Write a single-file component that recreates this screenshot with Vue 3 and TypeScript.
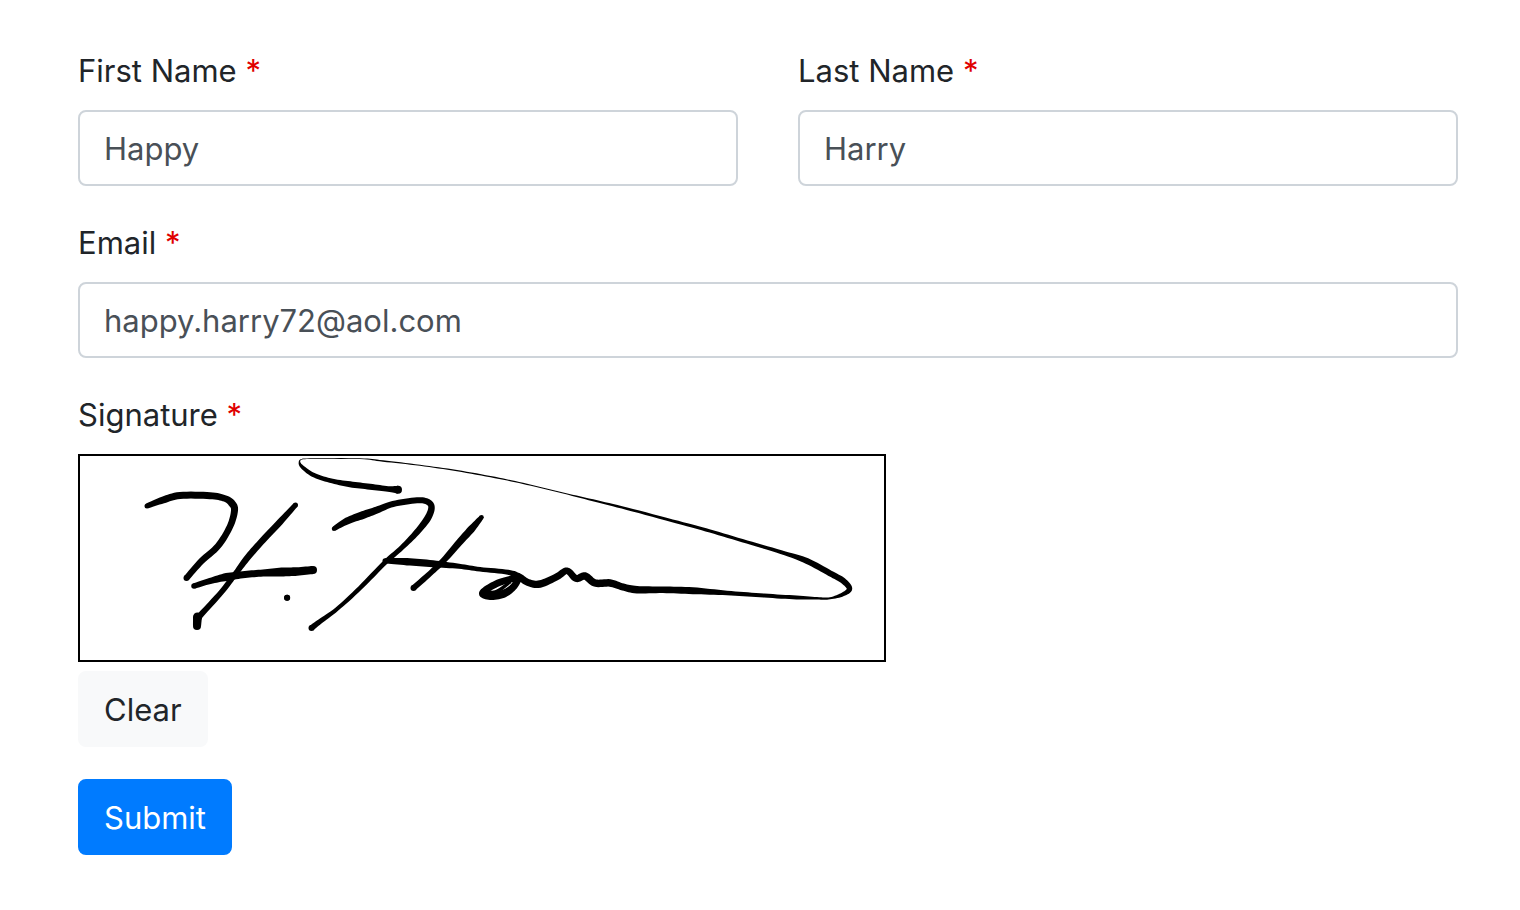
<script setup lang="ts">
import { computed, ref } from 'vue'

// A pen sample: x, y and the width of the nib at that spot.
type Sample = [number, number, number]

const firstName = ref('Happy')
const lastName = ref('Harry')
const email = ref('happy.harry72@aol.com')

const strokes = ref<Sample[][]>([
  [[67, 50, 5], [83, 44, 7], [100, 39.5, 7], [130, 39.7, 7], [145, 42.5, 6.5], [152, 47.5, 7.5], [154.5, 54.5, 7], [150, 70.5, 6.5], [138, 90, 6.5], [121.5, 105, 6.5], [106.5, 122, 6]],
  [[215.5, 49, 5], [200, 66, 6.5], [183, 84, 6.5], [168, 101, 6.5], [156, 117, 5.5], [141.5, 136, 5.5], [121.5, 158, 6], [117, 163, 7]],
  [[117.5, 161, 9], [117, 170, 8]],
  [[114, 130, 5.5], [130, 125, 6], [146.5, 121, 8], [165, 118.5, 7], [183, 117, 7], [201.5, 116, 9], [217, 115.5, 8.5], [233, 114, 8]],
  [[207, 141.7, 6], [207.2, 141.7, 6]],
  [[254, 72.7, 4.5], [267, 65, 7], [283, 59, 8], [297, 54, 7], [313, 48, 6], [337, 44.3, 6], [348, 46, 6], [351.5, 52, 6.5], [347, 63.3, 7], [335, 78.3, 6], [320, 93.3, 5], [305, 106.5, 5], [280, 132, 4.5], [257, 153, 4], [240, 165.5, 5], [231.5, 172, 6]],
  [[401.5, 61.3, 4.5], [391, 73.5, 7.5], [379, 86.7, 7], [364, 104, 6], [350, 117.5, 5.5], [333.5, 132, 6]],
  [[439, 121, 6], [420, 126.3, 7], [407, 133, 7], [402, 138, 6], [410, 140.5, 7], [423, 138, 8], [433, 131.3, 7], [439, 122, 7]],
  [[407, 137, 4], [417, 135.5, 4], [430, 126, 3]],
  [
    [305, 104.7, 5], [327, 105.7, 7.5], [353, 107.7, 7], [379, 110.3, 5], [400, 113.3, 4.5], [428, 116.3, 5], [439, 120.7, 7], [448, 126.5, 7], [460, 128, 7.5], [477, 120.7, 7],
    [487, 114.7, 6.5], [496, 122.5, 7], [505, 120, 7.5], [515, 127, 7.5], [530, 127, 7.5], [543, 131, 7], [557, 133.7, 7.5], [583, 133.8, 6.5], [613, 134.7, 7], [647, 137, 4.5],
    [680, 139.3, 4], [713, 141.3, 4], [737, 142.3, 2.5], [750, 142.3, 2], [763, 138.3, 4], [769.5, 132.7, 5.5], [763, 124.7, 6], [750, 117.3, 6], [727, 105, 6], [705, 97.3, 4],
    [667, 86, 3.2], [630, 75, 3.3], [598, 66.3, 3], [547, 52.7, 2.5], [513, 44.3, 2], [480, 36.3, 0.9], [447, 28.3, 1.2], [415, 21.5, 1.3], [377, 14.7, 1.3], [340, 9.3, 1],
    [303, 5, 1.5], [280, 2.7, 0.8], [230, 2.7, 0.7], [221.5, 3.5, 0.7], [219.5, 6, 1.5], [222, 10.7, 3.5], [233, 18.7, 4.5], [250, 24.5, 4.5], [270, 28.3, 6], [290, 30.7, 6], [308, 33, 5.5], [318, 33.7, 8],
  ],
])

function spline(a: number, b: number, c: number, d: number, t: number): number {
  return 0.5 * (2 * b + (c - a) * t + (2 * a - 5 * b + 4 * c - d) * t * t + (3 * b - a - 3 * c + d) * t * t * t)
}

function smooth(points: Sample[]): Sample[] {
  const result: Sample[] = []
  const steps = 8
  for (let i = 0; i < points.length - 1; i++) {
    const a = points[Math.max(0, i - 1)]
    const b = points[i]
    const c = points[i + 1]
    const d = points[Math.min(points.length - 1, i + 2)]
    for (let s = 0; s < steps; s++) {
      const t = s / steps
      result.push([spline(a[0], b[0], c[0], d[0], t), spline(a[1], b[1], c[1], d[1], t), b[2] + (c[2] - b[2]) * t])
    }
  }
  result.push(points[points.length - 1])
  return result
}

// The closed outline of a stroke whose width varies along its length.
function outline(points: Sample[]): string {
  const line = smooth(points)
  const left: string[] = []
  const right: string[] = []
  line.forEach(([x, y, w], i) => {
    const p = line[Math.max(0, i - 1)]
    const n = line[Math.min(line.length - 1, i + 1)]
    const dx = n[0] - p[0]
    const dy = n[1] - p[1]
    const len = Math.hypot(dx, dy) || 1
    const ox = (-dy / len) * (w / 2)
    const oy = (dx / len) * (w / 2)
    left.push(`${(x + ox).toFixed(2)} ${(y + oy).toFixed(2)}`)
    right.unshift(`${(x - ox).toFixed(2)} ${(y - oy).toFixed(2)}`)
  })
  return `M${left.concat(right).join('L')}Z`
}

const ink = computed(() =>
  strokes.value.map((s) => ({ d: outline(s), start: s[0], end: s[s.length - 1] })),
)

function clearSignature(): void {
  strokes.value = []
}
</script>

<template>
  <form class="form" @submit.prevent>
    <div class="row">
      <div class="field">
        <label class="label" for="first-name">First Name <span class="required">*</span></label>
        <input id="first-name" v-model="firstName" class="control" type="text" />
      </div>
      <div class="field">
        <label class="label" for="last-name">Last Name <span class="required">*</span></label>
        <input id="last-name" v-model="lastName" class="control" type="text" />
      </div>
    </div>

    <div class="field">
      <label class="label" for="email">Email <span class="required">*</span></label>
      <input id="email" v-model="email" class="control" type="email" />
    </div>

    <div class="field">
      <span id="signature-label" class="label">Signature <span class="required">*</span></span>
      <svg class="pad" viewBox="0 0 804 204" role="img" aria-labelledby="signature-label">
        <g v-for="(s, i) in ink" :key="i">
          <path :d="s.d" />
          <circle :cx="s.start[0]" :cy="s.start[1]" :r="s.start[2] / 2" />
          <circle :cx="s.end[0]" :cy="s.end[1]" :r="s.end[2] / 2" />
        </g>
      </svg>
      <button class="button light" type="button" @click="clearSignature">Clear</button>
    </div>

    <button class="button primary" type="submit">Submit</button>
  </form>
</template>

<style>
body {
  margin: 0;
  background: #fff;
}
</style>

<style scoped>
.form {
  display: flex;
  flex-direction: column;
  align-items: stretch;
  gap: 32px;
  padding: 46px 62px 55px 78px;
  font-family: Inter, "Liberation Sans", sans-serif;
  font-size: 31px;
  line-height: 48px;
  color: #212529;
}

.row {
  display: grid;
  grid-template-columns: 1fr 1fr;
  gap: 60px;
}

.field {
  display: flex;
  flex-direction: column;
  align-items: flex-start;
  min-width: 0;
}

.label {
  padding: 1px 0 15px;
}

.required {
  color: #e00000;
}

.control {
  box-sizing: border-box;
  width: 100%;
  height: 76px;
  padding: 12px 24px;
  border: 2px solid #ced4da;
  border-radius: 8px;
  background: #fff;
  color: #495057;
  font: inherit;
}

.pad {
  box-sizing: border-box;
  width: 808px;
  max-width: 100%;
  border: 2px solid #000;
  background: #fff;
  fill: #000;
}

.button {
  align-self: flex-start;
  padding: 13px 24px 11px;
  border: 2px solid transparent;
  border-radius: 8px;
  font: inherit;
  cursor: pointer;
}

.light {
  margin-top: 9px;
  border-color: #f8f9fa;
  background: #f8f9fa;
  color: #212529;
}

.primary {
  border-color: #007bff;
  background: #007bff;
  color: #fff;
}
</style>
